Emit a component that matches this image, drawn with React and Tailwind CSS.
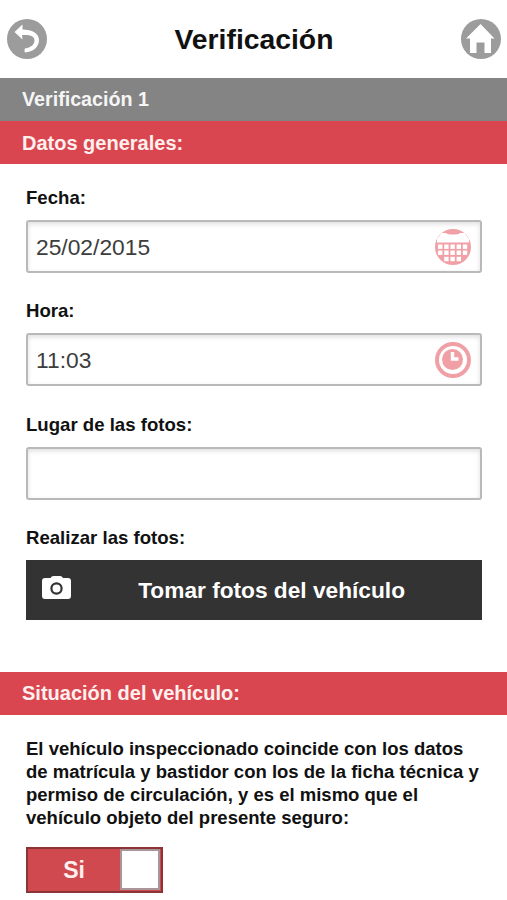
/*    Icons    */
const BackIcon = () => (
    <svg className="h-10 w-10" viewBox="0 0 40 40" aria-hidden="true">
        <circle cx="20" cy="20" r="20" fill="#9c9c9c" />
        <path d="M7.5 13 L15.5 5.5 L15.5 10.5 C25 10.5 32 14.5 32 21 C32 28 26 33 18 33.5 C17.2 32 17.5 30.5 18 29.5 C24 28.5 27.5 25.5 27.5 21.5 C27.5 17 23 15.5 15 16 L15.5 20.5 Z" fill="#fff" />
    </svg>
);

const HomeIcon = () => (
    <svg className="h-10 w-10" viewBox="0 0 40 40" aria-hidden="true">
        <circle cx="20" cy="20" r="20" fill="#9c9c9c" />
        <path d="M19.5 5 L33.5 19.5 H30 V34 H23.5 V23.5 H15.5 V34 H9 V19.5 H5 Z" fill="#fff" />
    </svg>
);

const CalendarIcon = () => (
    <svg className="h-9 w-9" viewBox="0 0 36 36" aria-hidden="true">
        <circle cx="18" cy="18" r="18" fill="#f0a0a6" />
        <path d="M6.5 4 H11 C12 6 24 6 25 4 H29.5 L34 10 V13.5 H2 V10 Z" fill="#fff" />
        {[15.5, 21.5, 27.8].map((y) =>
            [3, 9.2, 15.4, 21.6, 27.8].map((x) => (y > 27 && (x === 3 || x > 27) ? null : <rect key={`${x}-${y}`} x={x} y={y} width="4.4" height="4.4" fill="#fff" />))
        )}
    </svg>
);

const ClockIcon = () => (
    <svg className="h-9 w-9" viewBox="0 0 36 36" aria-hidden="true">
        <circle cx="18" cy="18" r="16" fill="#fff" stroke="#f0a0a4" strokeWidth="4" />
        <circle cx="17.5" cy="17.5" r="10.5" fill="#f0a0a4" />
        <path d="M17.5 10 V17 H23.5" fill="none" stroke="#fff" strokeWidth="3.4" />
    </svg>
);

const CameraIcon = () => (
    <svg className="mb-[5px] h-[23px] w-[29px]" viewBox="0 0 29 23" aria-hidden="true">
        <path d="M3 2 H8.5 Q9.5 0 11.5 0 H18 Q20 0 21 2 H26 Q29 2 29 5 V20 Q29 23 26 23 H3 Q0 23 0 20 V5 Q0 2 3 2 Z" fill="#fff" />
        <circle cx="14.5" cy="12.5" r="5.1" fill="none" stroke="#333" strokeWidth="2.2" />
    </svg>
);

// full width section title
const SectionBar = ({ children }) => <h2 className="flex h-[43px] items-center bg-[#d9464f] pl-[22px] text-[20px] font-bold text-[#fff0ee]">{children}</h2>;

// label + text input with an optional icon on the right
const Field = ({ name, label, value, icon }) => (
    <div>
        <label htmlFor={name} className="block h-6 text-[18.6px] leading-6 font-bold">
            {label}
        </label>
        <div className="mt-[10px] flex h-[53px] items-center rounded-[3px] border-2 border-[#b9b9b9] bg-white pr-[9px] pl-2 shadow-[inset_0_2px_5px_rgba(0,0,0,0.13)]">
            <input id={name} name={name} type="text" defaultValue={value} className="min-w-0 flex-1 bg-transparent pt-px text-[22.8px] text-[#3d3d3d] outline-none" />
            {icon}
        </div>
    </div>
);

const App = () => {
    return (
        <main className="h-[900px] w-[507px] overflow-hidden bg-white font-['Liberation_Sans',Arial,sans-serif] text-[#111]">
            <header className="flex h-[78px] items-center justify-between pr-[6px] pl-[7px]">
                <button type="button" aria-label="Volver">
                    <BackIcon />
                </button>
                <h1 className="pt-px text-[28.3px] font-bold">Verificación</h1>
                <button type="button" aria-label="Inicio">
                    <HomeIcon />
                </button>
            </header>

            <div className="flex h-[43px] items-center bg-[#848484] pl-[22px] text-[19.7px] font-bold text-[#f5f5f5]">Verificación 1</div>
            <SectionBar>Datos generales:</SectionBar>

            <form className="flex flex-col gap-[26.3px] pt-[22px] pr-[25px] pl-[26px]">
                <Field name="fecha" label="Fecha:" value="25/02/2015" icon={<CalendarIcon />} />
                <Field name="hora" label="Hora:" value="11:03" icon={<ClockIcon />} />
                <Field name="lugar" label="Lugar de las fotos:" value="" />
                <div>
                    <p className="h-6 text-[18.6px] leading-6 font-bold">Realizar las fotos:</p>
                    <button type="button" className="mt-[10px] flex h-[60px] w-full items-center bg-[#333] pr-[77px] pl-4 text-white">
                        <CameraIcon />
                        <span className="flex-1 text-right text-[22.7px] font-bold">Tomar fotos del vehículo</span>
                    </button>
                </div>
            </form>

            <section className="mt-[52px]">
                <SectionBar>Situación del vehículo:</SectionBar>
                <p className="px-[26px] pt-[22px] text-[18.53px] leading-[23px] font-bold whitespace-nowrap">
                    El vehículo inspeccionado coincide con los datos
                    <br />
                    de matrícula y bastidor con los de la ficha técnica y
                    <br />
                    permiso de circulación, y es el mismo que el
                    <br />
                    vehículo objeto del presente seguro:
                </p>
                <button type="button" role="switch" aria-checked="true" className="mt-[18px] ml-[26px] flex h-[46px] w-[137px] border-2 border-[#8b3438] bg-[#d0494e]">
                    <span className="flex flex-1 items-center justify-center self-stretch pt-px text-[23px] font-bold text-[#fff0ee]">Si</span>
                    <span className="mr-px h-[41px] w-[40px] border-2 border-[#a89499] bg-white" />
                </button>
            </section>
        </main>
    );
};
export default App;
